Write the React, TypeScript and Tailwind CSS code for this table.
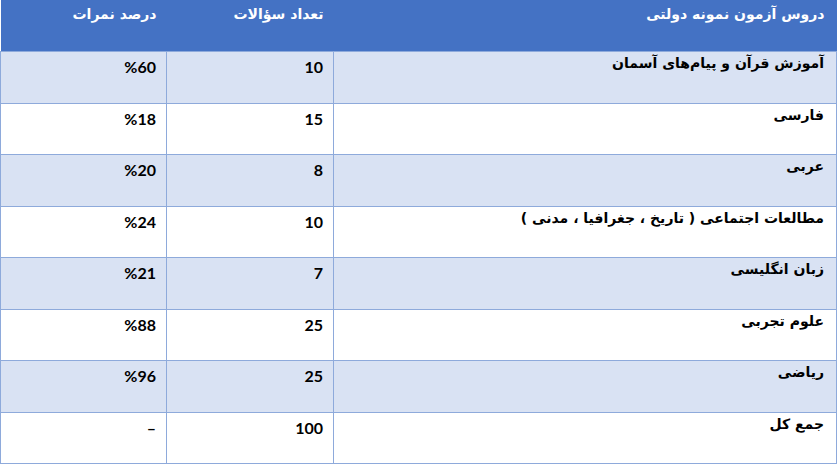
const rows = [
  { name: "آموزش قرآن و پیام‌های آسمان", count: "10", percent: "%60" },
  { name: "فارسی", count: "15", percent: "%18" },
  { name: "عربی", count: "8", percent: "%20" },
  { name: "مطالعات اجتماعی ( تاریخ ، جغرافیا ، مدنی )", count: "10", percent: "%24" },
  { name: "زبان انگلیسی", count: "7", percent: "%21" },
  { name: "علوم تجربی", count: "25", percent: "%88" },
  { name: "ریاضی", count: "25", percent: "%96" },
  { name: "جمع کل", count: "100", percent: "–" },
];

const fa = { fontFamily: '"DejaVu Sans", "Noto Sans", sans-serif' };
const num = { fontFamily: 'Lato, "Liberation Sans", sans-serif' };

export default function App() {
  return (
    <div className="h-[467px] w-[837px] bg-white">
      <table dir="rtl" className="w-[836px] table-fixed border-collapse">
        <colgroup>
          <col className="w-[503px]" />
          <col className="w-[167px]" />
          <col className="w-[166px]" />
        </colgroup>
        <thead>
          <tr className="h-[51.5px] bg-[#4472c4] align-top text-white">
            <th className="pr-3 pt-[4px] text-right text-[14px] font-bold" style={fa}>
              دروس آزمون نمونه دولتی
            </th>
            <th className="pr-[10px] pt-[4px] text-right text-[14px] font-bold" style={fa}>
              تعداد سؤالات
            </th>
            <th className="pr-[10px] pt-[4px] text-right text-[14px] font-bold" style={fa}>
              درصد نمرات
            </th>
          </tr>
        </thead>
        <tbody>
          {rows.map((r, i) => (
            <tr key={r.name} className={`h-[51.5px] align-top ${i % 2 === 0 ? "bg-[#d9e2f3]" : "bg-white"}`}>
              <td className="border border-[#8eaadb] pr-3 pt-[1px] text-right text-[14px] font-bold text-black" style={fa}>
                {r.name}
              </td>
              <td className="border border-[#8eaadb] pr-[10px] pt-[3px] text-right text-[16px] font-bold text-black" style={num}>
                <span dir="ltr">{r.count}</span>
              </td>
              <td className="border border-[#8eaadb] pr-[10px] pt-[3px] text-right text-[16px] font-bold text-black" style={num}>
                <span dir="ltr">{r.percent}</span>
              </td>
            </tr>
          ))}
        </tbody>
      </table>
    </div>
  );
}
